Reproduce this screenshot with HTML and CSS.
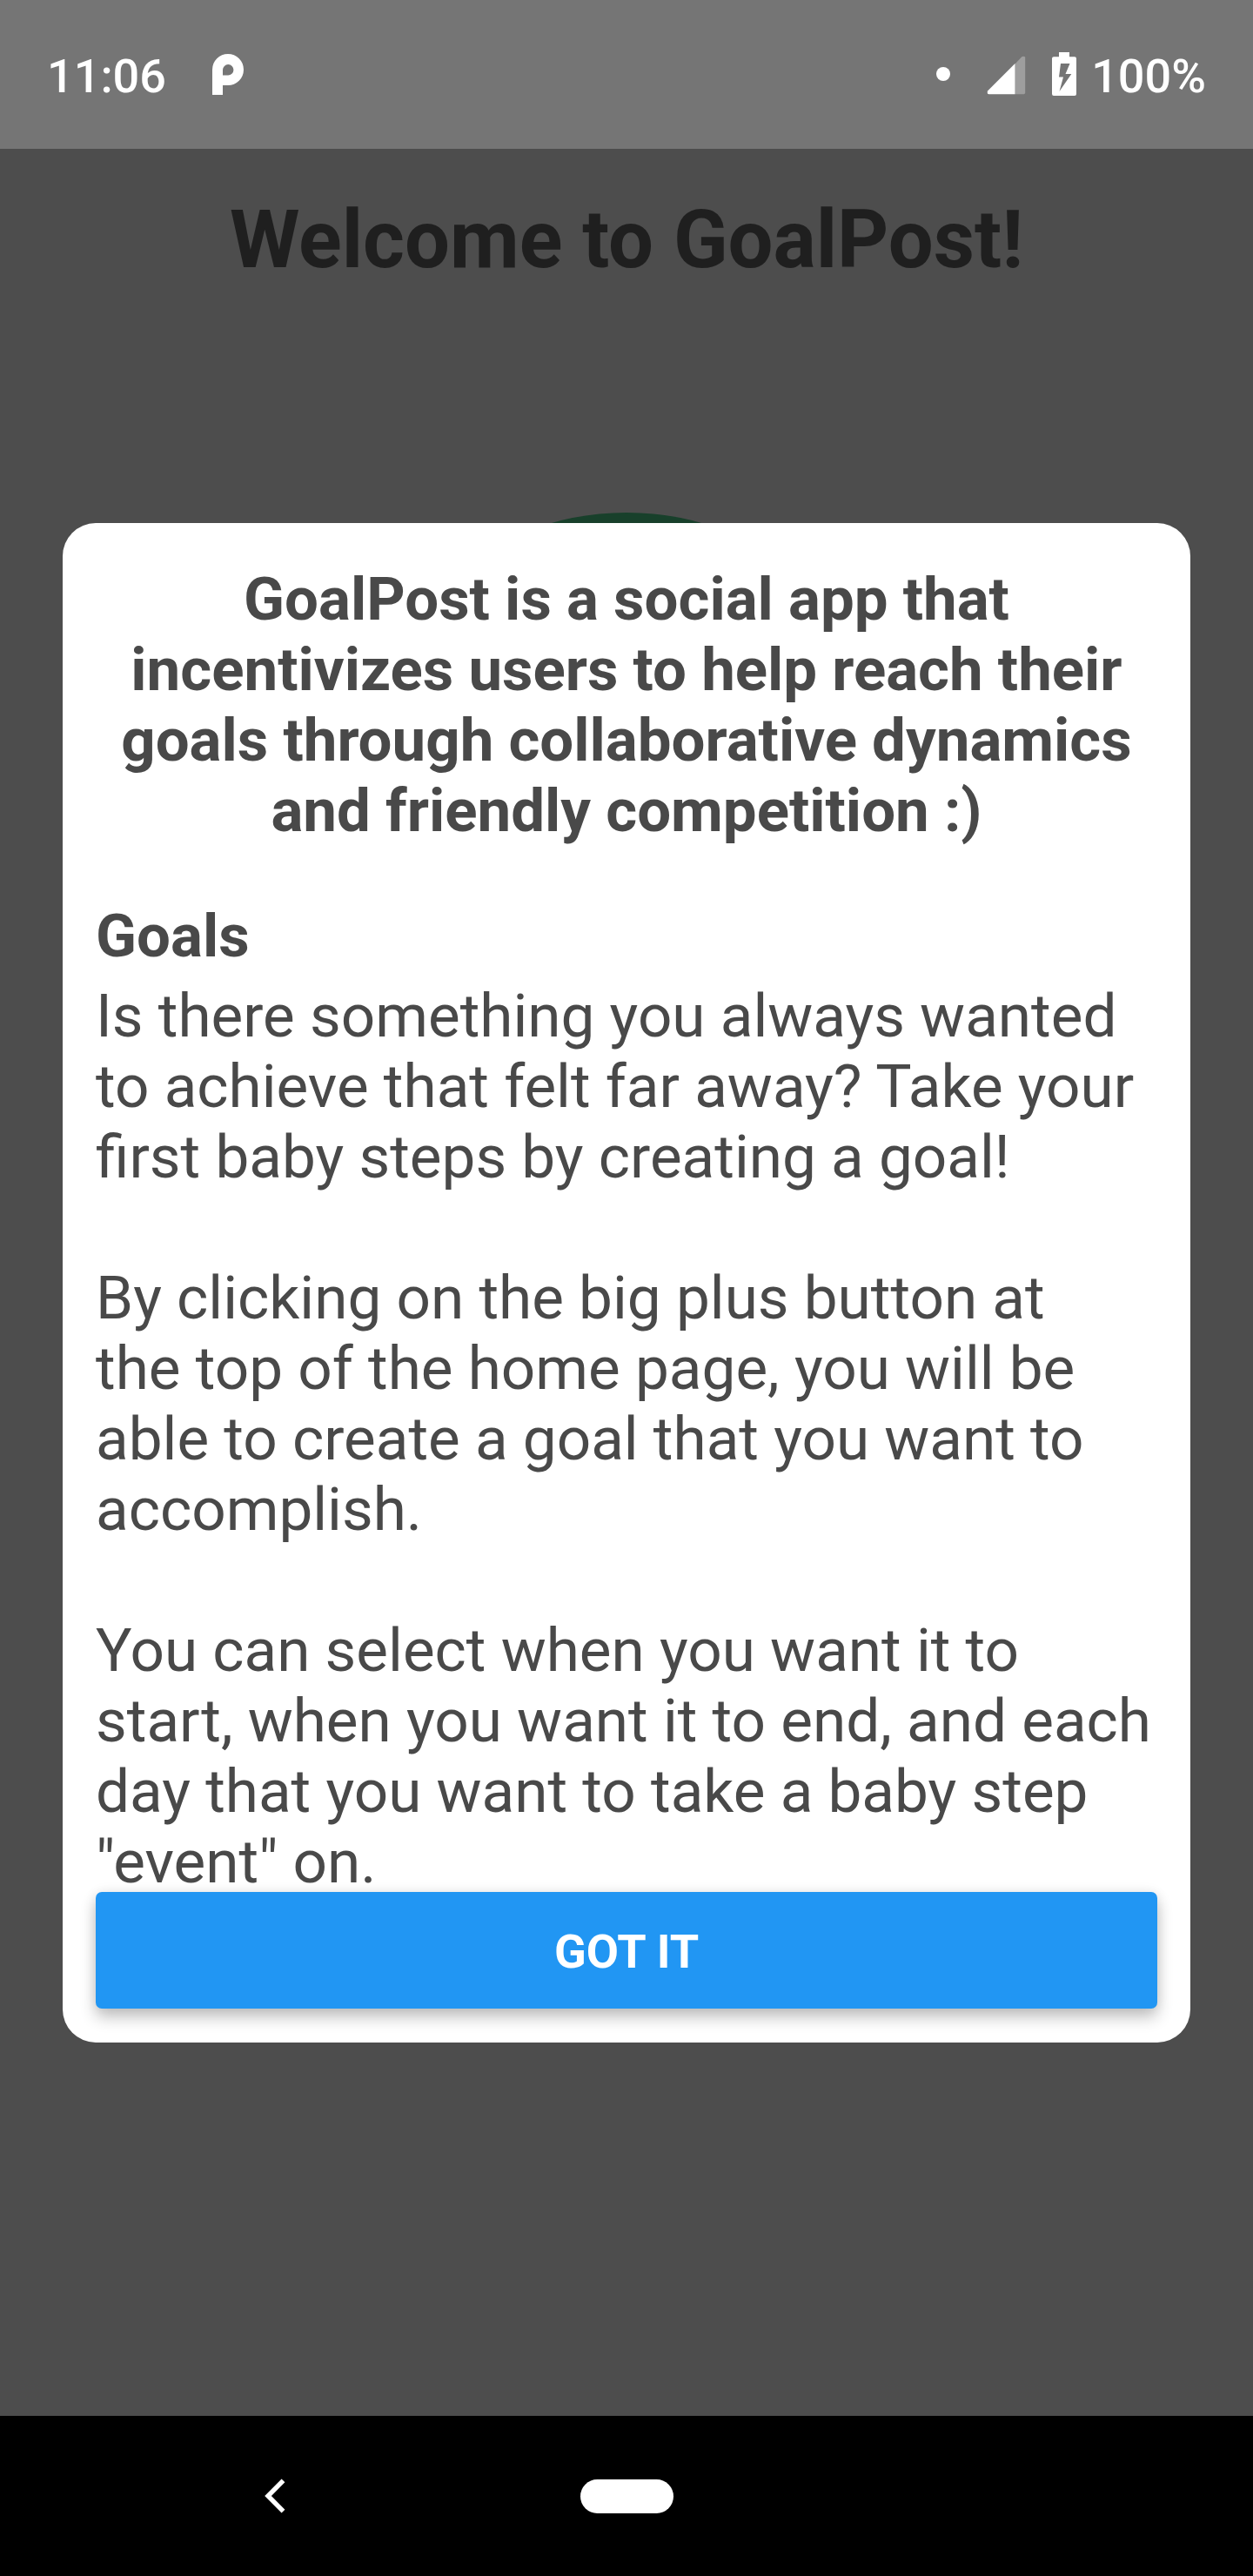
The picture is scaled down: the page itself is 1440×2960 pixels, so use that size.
FILE: index.html
```html
<!DOCTYPE html>
<html lang="en">
<head>
<meta charset="utf-8">
<title>GoalPost</title>
<link rel="stylesheet" href="styles.css">
</head>
<body>
<div class="screen">
  <header class="status-bar">
    <div class="status-left">
      <span class="status-text">11:06</span>
      <svg class="app-icon" width="36" height="47" viewBox="0 0 36 47"><path fill="#fff" fill-rule="evenodd" d="M0 47V18a18 18 0 1 1 18 18H12V47ZM12 24.500h6a6.200 6.200 0 1 0-6-6.200Z"/></svg>
    </div>
    <div class="status-right">
      <span class="dot"></span>
      <svg class="signal" width="45" height="45" viewBox="0 0 45 45"><path fill="#9e9e9e" d="M32.500 9.500 40 1.500Q42 0 44.200 1.500V42.500Q44.200 44.300 42.500 44.300H32.500Z"/><path fill="#fff" d="M32.500 9 1 40.500Q0 44.300 2.500 44.300H32.500Z"/></svg>
      <svg class="battery" width="28" height="50" viewBox="0 0 28 50"><path fill="#fff" fill-rule="evenodd" d="M8 0H20V5.300H26Q28 5.300 28 7.300V48Q28 50 26 50H2Q0 50 0 48V7.300Q0 5.300 2 5.300H8ZM10 13 8 28.500H13L8.500 45 22.300 25H15.500L20.500 13Z"/></svg>
      <span class="status-text">100%</span>
    </div>
  </header>
  <main class="page">
    <h1 class="page-title">Welcome to GoalPost!</h1>
    <div class="logo"></div>
    <section class="modal">
      <h2 class="modal-title">GoalPost is a social app that<br>incentivizes users to help reach their<br>goals through collaborative dynamics<br>and friendly competition :)</h2>
      <h3 class="section-title">Goals</h3>
      <p class="copy">Is there something you always wanted<br>to achieve that felt far away? Take your<br>first baby steps by creating a goal!</p>
      <p class="copy">By clicking on the big plus button at<br>the top of the home page, you will be<br>able to create a goal that you want to<br>accomplish.</p>
      <p class="copy">You can select when you want it to<br>start, when you want it to end, and each<br>day that you want to take a baby step<br>"event" on.</p>
      <button class="confirm">GOT IT</button>
    </section>
  </main>
  <nav class="nav-bar">
    <svg class="back" width="24" height="40" viewBox="0 0 24 40"><path fill="none" stroke="#fff" stroke-width="5.400" d="M21.500 2.300 4 20 21.500 37.700"/></svg>
    <span class="home"></span>
  </nav>
</div>
</body>
</html>
```
FILE: styles.css
```css
* { box-sizing: border-box; }
body { margin: 0; font-family: Roboto, sans-serif; }
.screen { width: 1440px; height: 2960px; display: flex; flex-direction: column; overflow: hidden; background: #4d4d4d; }
.status-bar { height: 171px; padding: 0 54px 0 54px; display: flex; justify-content: space-between; background: #757575; }
.status-left, .status-right { display: flex; align-items: flex-start; }
.status-text { margin-top: 56px; font-size: 54px; line-height: 64px; font-weight: 500; color: #fff; white-space: nowrap; }
.app-icon { margin: 62px 0 0 53px; }
.dot { width: 16px; height: 16px; margin-top: 77px; border-radius: 50%; background: #fff; }
.signal { margin: 64px 0 0 42px; }
.battery { margin: 60px 17px 0 30px; }
.page { position: relative; height: 2605px; padding-top: 51px; overflow: hidden; }
.page-title { margin: 0; font-size: 92px; line-height: 107px; font-weight: 700; text-align: center; color: #1f1f1f; }
.logo { width: 636px; height: 636px; margin: 260px auto 0; border-radius: 50%; background: #18402b; }
.modal { position: absolute; left: 72px; top: 430px; width: 1296px; height: 1746px; padding: 47px 38px 39px; display: flex; flex-direction: column; border-radius: 38px; background: #fff; color: #494949; font-size: 69px; line-height: 81px; white-space: nowrap; }
.modal-title { margin: 0 0 63px; font-size: inherit; font-weight: 700; text-align: center; }
.section-title { margin: 0 0 11px; font-size: inherit; font-weight: 700; }
.copy { margin: 0 0 81px; font-size: 69.25px; }
.copy:last-of-type { margin-bottom: -12px; }
.confirm { height: 134px; margin-top: auto; padding: 4px 0 0; flex: none; border: 0; border-radius: 7px; background: #2196f3; box-shadow: 0 10px 18px rgba(0,0,0,.24), 0 0 14px rgba(0,0,0,.08); color: #fff; font: 700 54px/64px Roboto, sans-serif; }
.nav-bar { height: 184px; display: flex; align-items: center; padding-left: 304px; background: #000; }
.home { width: 107px; height: 39px; margin-left: 339px; border-radius: 20px; background: #fff; }
```
